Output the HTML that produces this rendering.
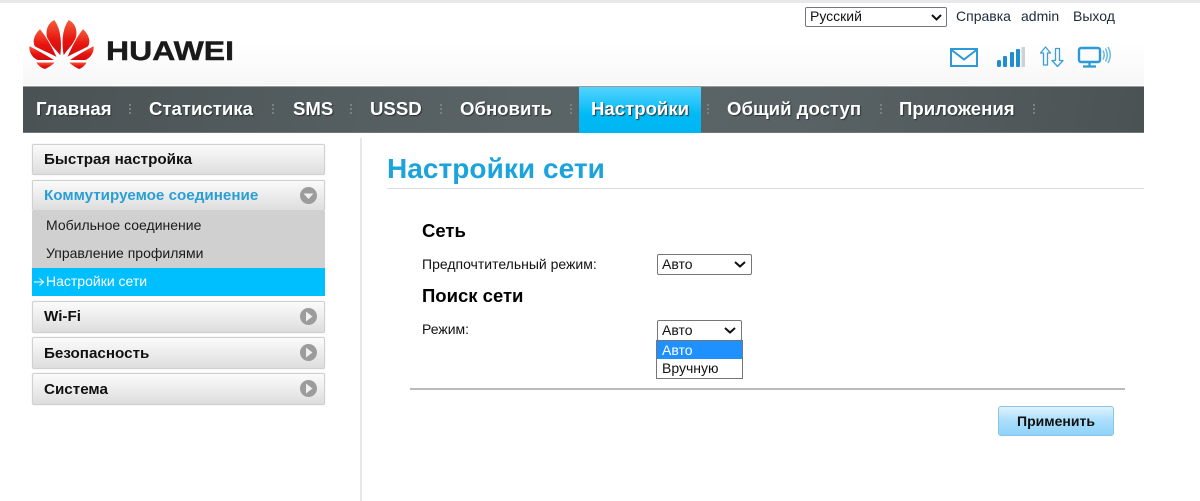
<!DOCTYPE html>
<html lang="ru"><head><meta charset="utf-8"><title>Настройки сети</title>
<style>
*{box-sizing:border-box;margin:0;padding:0}
html,body{width:1200px;height:501px;overflow:hidden;background:#fff}
body{position:relative;font-family:"Liberation Sans",Arial,sans-serif;color:#222}
.a{position:absolute;white-space:nowrap}
#top{left:0;top:0;width:1200px;height:3px;background:#e8e8ea}
#hdr{left:23px;top:3px;width:1121px;height:82px;background:linear-gradient(#fff 0,#fff 50%,#f7f7f7 100%)}
#nav{left:23px;top:86px;width:1121px;height:47px;background:linear-gradient(100deg,#4a5254 0,#5a6466 45%,#596264 70%,#4a5254 100%);border-top:1px solid #999;border-bottom:1px solid #70787a}
#act{left:579px;top:87px;width:122px;height:46px;background:linear-gradient(#54d4ff 0,#00b9f5 60%,#00b6f2 100%)}
.n{top:97px;font:bold 18.6px/23px "Liberation Sans",sans-serif;color:#fff;text-shadow:1px 1px 1px #2c3234}
.s{top:104px;width:2px;height:10px;border-left:2px dotted #788183}
.t{font-size:14px;line-height:18px;color:#111}
.m{left:32px;width:293px;border:1px solid #d0d0d0;border-radius:2px;background:linear-gradient(#fbfbfb,#dedede);box-shadow:0 0 1px #ccc;font:bold 15.2px/30px "Liberation Sans",sans-serif;color:#111;padding-left:11px}
.sub{left:46px;font-size:14px;line-height:18px;color:#1a1a1a}
.sel{background:#fff;border:1px solid #767676;border-radius:2px;font-size:14px;line-height:18px;padding-left:4px;color:#111}
.sel svg{position:absolute;top:6px}
.c{width:19px;height:19px}
</style></head><body>
<div class="a" id="top"></div>
<div class="a" id="hdr"></div>

<svg class="a" style="left:25px;top:15px" width="215" height="60" viewBox="25 15 215 60">
<defs><linearGradient id="r" x1="0" y1="0" x2="0" y2="1"><stop offset="0" stop-color="#f4603f"/><stop offset=".55" stop-color="#e8140f"/><stop offset="1" stop-color="#c90d10"/></linearGradient></defs>
<g fill="url(#r)" stroke="#fff" stroke-width=".9" stroke-linejoin="round">
<path d="M54.500 19.500C47.500 22.500 45 30 46.500 37C48 44 56 50 60.500 56.500C62 47 62.500 30 54.500 19.500Z"/>
<path d="M68.500 19.500C75.500 22.500 78 30 76.500 37C75 44 67 50 63.500 56.500C61.500 47 60.500 30 68.500 19.500Z"/>
<path d="M40 28.500C34 34 31.500 41 34.500 46.500C40 50 50 53.500 57.500 58C53 48 47 37 40 28.500Z"/>
<path d="M83 28.500C89 34 91.500 41 88.500 46.500C83 50 73 53.500 66.500 58C71 48 76 37 83 28.500Z"/>
<path d="M29 45.500C28 53 33 59 38 60.500L55.500 60.500C47.500 55.500 38 50 29 45.500Z"/>
<path d="M94 45.500C95 53 90 59 85 60.500L68.500 60.500C76 55.500 85 50 94 45.500Z"/>
<path d="M35.500 62L56 62C53 65 48.500 68 45 69.500C41 68.500 37.500 65.500 35.500 62Z"/>
<path d="M87.500 62L68 62C71 65 75.500 68 79 69.500C83 68.500 85.500 65.500 87.500 62Z"/>
</g>
<text x="106" y="60" font-family="Liberation Sans,sans-serif" font-weight="700" font-size="26.500" fill="#1a1a1a" stroke="#1a1a1a" stroke-width=".4" textLength="128" lengthAdjust="spacingAndGlyphs">HUAWEI</text>
</svg>

<div class="a sel" style="left:805px;top:7px;width:142px;height:20px;line-height:17px">Русский<svg style="left:125px" width="11" height="7" viewBox="0 0 11 7"><path d="M1 1L5.500 5.500L10 1" fill="none" stroke="#111" stroke-width="2"/></svg></div>
<div class="a t" style="left:956px;top:7px;color:#1d2a3a">Справка</div>
<div class="a t" style="left:1021px;top:7px;color:#1d2a3a">admin</div>
<div class="a t" style="left:1073px;top:7px;color:#1d2a3a">Выход</div>

<svg class="a" style="left:945px;top:42px" width="172" height="30" viewBox="945 42 172 30" fill="none">
<g stroke="#2b9ad6" stroke-width="2">
<rect x="951" y="49" width="26" height="17"/>
<path d="M951 49.500L964 59.500L977 49.500"/>
</g>
<g fill="#1f8fd0">
<rect x="997" y="60" width="4" height="7" rx="1.500"/>
<rect x="1003" y="56" width="4" height="11" rx="1"/>
<rect x="1010" y="52" width="4" height="15" rx="1"/>
<rect x="1016" y="49" width="4" height="18" rx="1"/>
<rect x="1021.500" y="47" width="3.500" height="20" fill="#ccd2d8"/>
</g>
<g stroke="#3a9fd8" stroke-width="1.300" stroke-linejoin="round">
<path d="M1045.500 47L1040.500 53H1043.500V65H1047.500V53H1050.500Z"/>
<path d="M1057.500 66.500L1052 60.500H1055.500V48.500H1059.500V60.500H1063Z"/>
</g>
<rect x="1079" y="48" width="21" height="14" rx="2" stroke="#2b9ad6" stroke-width="2.400"/>
<path d="M1089.500 63V66M1083 66.500H1096" stroke="#2b9ad6" stroke-width="2.200"/>
<path d="M1103 50.500Q1105.500 55 1103 59.500M1105.500 48.500Q1109 55 1105.500 61.500M1108 47Q1112.500 55 1108 63" stroke="#6bb8e2" stroke-width="1.500"/>
</svg>

<div class="a" id="nav"></div>
<div class="a" id="act"></div>
<div class="a n" style="left:36px">Главная</div>
<div class="a n" style="left:149px">Статистика</div>
<div class="a n" style="left:293px">SMS</div>
<div class="a n" style="left:370px">USSD</div>
<div class="a n" style="left:460px">Обновить</div>
<div class="a n" style="left:591px">Настройки</div>
<div class="a n" style="left:727px">Общий доступ</div>
<div class="a n" style="left:899px">Приложения</div>
<div class="a s" style="left:129px"></div>
<div class="a s" style="left:272px"></div>
<div class="a s" style="left:350px"></div>
<div class="a s" style="left:440px"></div>
<div class="a s" style="left:570px"></div>
<div class="a s" style="left:707px"></div>
<div class="a s" style="left:880px"></div>
<div class="a s" style="left:1033px"></div>

<div class="a m" style="top:144px;height:31px">Быстрая настройка</div>
<div class="a m" style="top:180px;height:31px;color:#2a9fd6">Коммутируемое соединение
<svg class="a c" style="left:266px;top:5px" viewBox="0 0 19 19"><circle cx="9.500" cy="9.500" r="8.500" fill="#9c9c9c"/><path d="M4.500 7.500H14.500L9.500 13Z" fill="#f0f0f0"/></svg></div>
<div class="a" style="left:32px;top:211px;width:293px;height:57px;background:#d0d0d0"></div>
<div class="a sub" style="top:216px">Мобильное соединение</div>
<div class="a sub" style="top:244px">Управление профилями</div>
<div class="a" style="left:32px;top:268px;width:293px;height:28px;background:#00bfff"></div>
<svg class="a" style="left:34px;top:277px" width="11" height="10" viewBox="0 0 11 10"><path d="M0 5H9M5.500 1.500L9.500 5L5.500 8.500" fill="none" stroke="#fff" stroke-width="1"/></svg>
<div class="a sub" style="top:272px;color:#fff">Настройки сети</div>
<div class="a m" style="top:301px;height:32px">Wi-Fi
<svg class="a c" style="left:266px;top:5px" viewBox="0 0 19 19"><circle cx="9.500" cy="9.500" r="8.500" fill="#9c9c9c"/><path d="M7 4.500V14.500L13.500 9.500Z" fill="#f0f0f0"/></svg></div>
<div class="a m" style="top:337px;height:32px;line-height:31px">Безопасность
<svg class="a c" style="left:266px;top:5px" viewBox="0 0 19 19"><circle cx="9.500" cy="9.500" r="8.500" fill="#9c9c9c"/><path d="M7 4.500V14.500L13.500 9.500Z" fill="#f0f0f0"/></svg></div>
<div class="a m" style="top:373px;height:32px;line-height:31px">Система
<svg class="a c" style="left:266px;top:5px" viewBox="0 0 19 19"><circle cx="9.500" cy="9.500" r="8.500" fill="#9c9c9c"/><path d="M7 4.500V14.500L13.500 9.500Z" fill="#f0f0f0"/></svg></div>

<div class="a" style="left:360px;top:138px;width:2px;height:363px;background:#e8e8e8"></div>

<div class="a" style="left:387px;top:153px;font:bold 28px/32px 'Liberation Sans',sans-serif;color:#1ba3db;letter-spacing:.05px">Настройки сети</div>
<div class="a" style="left:387px;top:188px;width:757px;height:1px;background:#dcdcdc"></div>

<div class="a" style="left:422px;top:220px;font:bold 18.500px/22px 'Liberation Sans',sans-serif;color:#000">Сеть</div>
<div class="a t" style="left:422px;top:255px">Предпочтительный режим:</div>
<div class="a sel" style="left:657px;top:254px;width:95px;height:21px">Авто<svg style="left:76px" width="12" height="7" viewBox="0 0 12 7"><path d="M1 1L6 5.500L11 1" fill="none" stroke="#111" stroke-width="2"/></svg></div>
<div class="a" style="left:422px;top:285px;font:bold 18.500px/22px 'Liberation Sans',sans-serif;color:#000">Поиск сети</div>
<div class="a t" style="left:422px;top:320px">Режим:</div>
<div class="a sel" style="left:657px;top:320px;width:85px;height:21px">Авто<svg style="left:66px" width="12" height="7" viewBox="0 0 12 7"><path d="M1 1L6 5.500L11 1" fill="none" stroke="#111" stroke-width="2"/></svg></div>
<div class="a" style="left:656px;top:340px;width:87px;height:39px;border:1px solid #767676;background:#fff"></div>
<div class="a" style="left:657px;top:341px;width:85px;height:18px;background:#1e90ff;color:#fff;font-size:14px;line-height:18px;padding-left:5px">Авто</div>
<div class="a" style="left:657px;top:359px;width:85px;height:19px;color:#111;font-size:14px;line-height:18px;padding-left:5px">Вручную</div>

<div class="a" style="left:410px;top:388px;width:715px;height:2px;background:#bbb"></div>
<div class="a" style="left:998px;top:406px;width:116px;height:30px;border:1px solid #8cc4e8;border-radius:3px;background:linear-gradient(#dff3fe 0,#a9defb 50%,#8fd3fa 100%);text-align:center;font:bold 14px/29px 'Liberation Sans',sans-serif;color:#111">Применить</div>
</body></html>
